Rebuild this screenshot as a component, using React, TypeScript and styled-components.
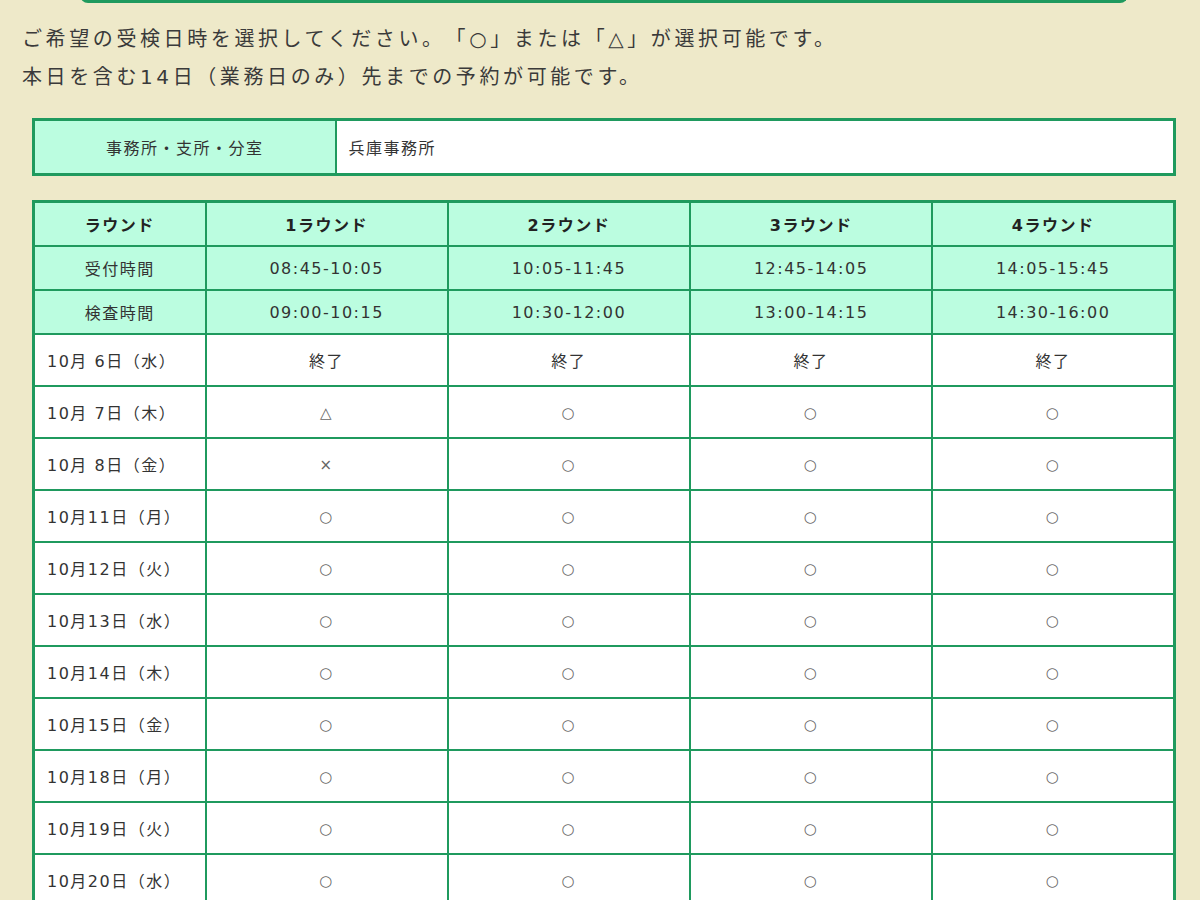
import React from "react";
import styled, { createGlobalStyle } from "styled-components";

const GlobalStyle = createGlobalStyle`
  html, body { margin: 0; padding: 0; background: #eee9c9; }
  body { font-family: "DejaVu Sans", "Noto Sans CJK JP", sans-serif; color: #333; overflow: hidden; }
`;

const Page = styled.div`
  padding: 0 24px 0 22px;
  width: 1154px;
`;

const TopBox = styled.div`
  margin: -20px 72px 0 80px;
  height: 20px;
  border: 3px solid #1f9a5e;
  border-top: none;
  border-radius: 0 0 8px 8px;
  background: #eee9c9;
`;

const Intro = styled.p`
  margin: 17px 0 22px;
  font-size: 20px;
  line-height: 38px;
  letter-spacing: 3.6px;
  text-spacing-trim: space-all;
  color: #3a3a3a;
`;

const Table = styled.table`
  margin-left: 10px;
  width: 1144px;
  border-collapse: collapse;
  border: 3px solid #1f9a5e;
  font-size: 16px;
  letter-spacing: 1.5px;
  table-layout: fixed;
`;

const InfoTable = styled(Table)`
  margin-bottom: 24px;
`;

const Cell = styled.td<{ $head?: boolean; $left?: boolean; $h?: number }>`
  border: 2px solid #1f9a5e;
  height: ${(p) => p.$h ?? 48}px;
  padding: 0 ${(p) => (p.$left ? "12px" : "4px")};
  text-align: ${(p) => (p.$left ? "left" : "center")};
  background: ${(p) => (p.$head ? "#bbfde0" : "#fff")};
  color: #333;
`;

const HeadCell = styled(Cell)`
  font-weight: bold;
  color: #222;
`;

const Mark = styled.span`
  color: #666;
  font-size: 15px;
`;

const rounds = [
  ["1ラウンド", "08:45-10:05", "09:00-10:15"],
  ["2ラウンド", "10:05-11:45", "10:30-12:00"],
  ["3ラウンド", "12:45-14:05", "13:00-14:15"],
  ["4ラウンド", "14:05-15:45", "14:30-16:00"],
];

const days: [string, string[]][] = [
  ["10月 6日（水）", ["終了", "終了", "終了", "終了"]],
  ["10月 7日（木）", ["△", "○", "○", "○"]],
  ["10月 8日（金）", ["×", "○", "○", "○"]],
  ["10月11日（月）", ["○", "○", "○", "○"]],
  ["10月12日（火）", ["○", "○", "○", "○"]],
  ["10月13日（水）", ["○", "○", "○", "○"]],
  ["10月14日（木）", ["○", "○", "○", "○"]],
  ["10月15日（金）", ["○", "○", "○", "○"]],
  ["10月18日（月）", ["○", "○", "○", "○"]],
  ["10月19日（火）", ["○", "○", "○", "○"]],
  ["10月20日（水）", ["○", "○", "○", "○"]],
];

export default function App() {
  return (
    <>
      <GlobalStyle />
      <TopBox />
      <Page>
        <Intro>
          ご希望の受検日時を選択してください。「○」または「△」が選択可能です。
          <br />
          本日を含む14日（業務日のみ）先までの予約が可能です。
        </Intro>
        <InfoTable>
          <colgroup>
            <col style={{ width: 302 }} />
            <col />
          </colgroup>
          <tbody>
            <tr>
              <Cell $head $h={52}>事務所・支所・分室</Cell>
              <Cell $left $h={52}>兵庫事務所</Cell>
            </tr>
          </tbody>
        </InfoTable>
        <Table>
          <colgroup>
            <col style={{ width: 172 }} />
            <col />
            <col />
            <col />
            <col />
          </colgroup>
          <tbody>
            <tr>
              <HeadCell $head $h={42}>ラウンド</HeadCell>
              {rounds.map((r) => (
                <HeadCell $head $h={42} key={r[0]}>{r[0]}</HeadCell>
              ))}
            </tr>
            <tr>
              <Cell $head $h={42}>受付時間</Cell>
              {rounds.map((r) => (
                <Cell $head $h={42} key={r[0]}>{r[1]}</Cell>
              ))}
            </tr>
            <tr>
              <Cell $head $h={42}>検査時間</Cell>
              {rounds.map((r) => (
                <Cell $head $h={42} key={r[0]}>{r[2]}</Cell>
              ))}
            </tr>
            {days.map(([d, marks]) => (
              <tr key={d}>
                <Cell $left $h={50}>{d}</Cell>
                {marks.map((m, i) => (
                  <Cell $h={50} key={i}>
                    {m === "終了" ? m : <Mark>{m}</Mark>}
                  </Cell>
                ))}
              </tr>
            ))}
          </tbody>
        </Table>
      </Page>
    </>
  );
}
